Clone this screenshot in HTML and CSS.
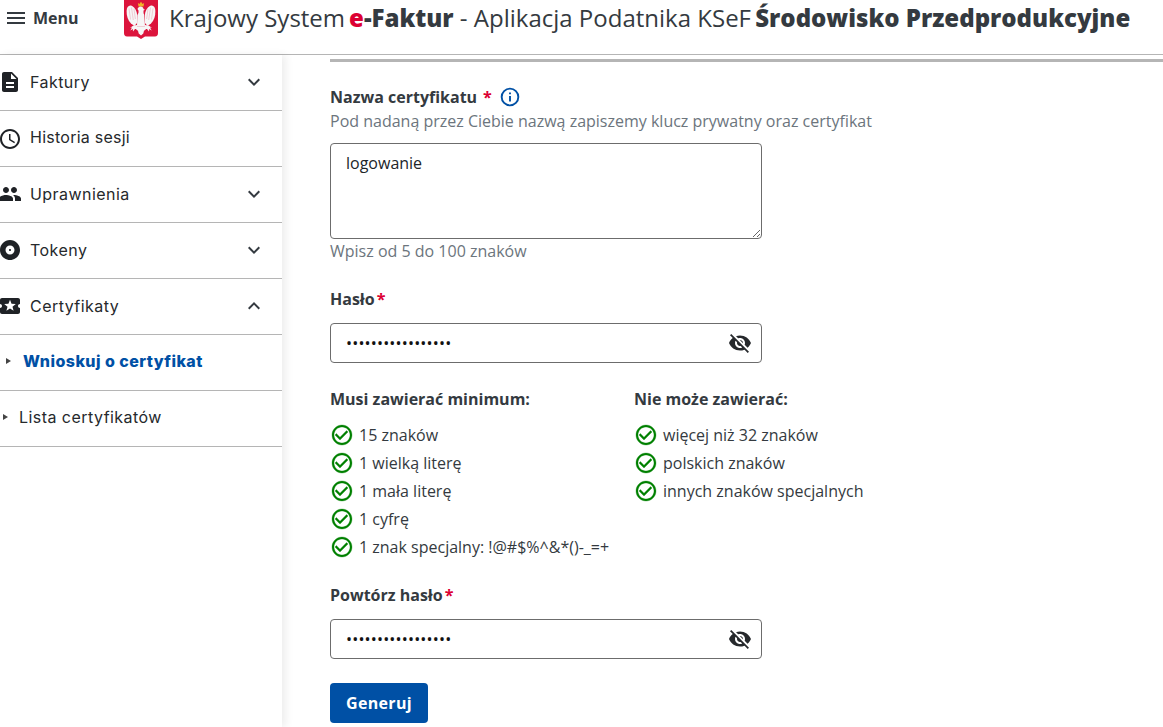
FILE: index.html
```html
<!DOCTYPE html>
<html lang="pl">
<head>
<meta charset="utf-8">
<title>Krajowy System e-Faktur</title>
<link rel="stylesheet" href="styles.css">
</head>
<body>
<header class="topbar">
  <button class="menu-btn" type="button">
    <svg class="ico-menu" viewBox="0 0 24 24"><path d="M3 18h18v-2H3v2zm0-5h18v-2H3v2zm0-7v2h18V6H3z"/></svg>
    <span>Menu</span>
  </button>
  <svg class="emblem" viewBox="0 0 34 40">
    <path class="shield" d="M0 -2h34v35c0 2-1 3.500-3 3.500h-10l-4 2.500-4-2.500H3c-2 0-3-1.500-3-3.500z"/>
    <path class="crown" d="M14.500 6.500l-.6-3.500 1.500 1 1.600-2.200 1.600 2.200 1.500-1-.6 3.500z"/>
    <g class="eagle">
      <path d="M16.500 6.500c1.800 0 3 1 3 2.500l1.500.8-1.500.6v2c0 .8.300 1.500.8 2.300L21 26h-8l.300-10.800c.4-1.200 1-1.800 1.200-2.700V10.500L13.500 9c.6-1.500 1.600-2.500 3-2.500z"/>
      <path id="wing" d="M13 14C12.500 10 10 6.500 7 5.500 4.300 5 2.700 7.500 2.600 11c-.1 5 1.400 9.500 4.400 12.500l3.500 2.500 2.500-3z"/>
      <path d="M21 14c.5-4 3-7.500 6-8.500 2.700-.5 4.300 2 4.400 5.500.1 5-1.400 9.500-4.400 12.500L23.500 26 21 23z"/>
      <path d="M13 25l-3.500.6-3.500 2.200 2-.2-1.700 3 2.500-1.500.2 2.500 2-2.600L13 29zM21 25l3.500.6 3.500 2.200-2-.2 1.700 3-2.500-1.500-.2 2.500-2-2.600L21 29z"/>
      <path d="M13 26h8l.8 3.500-1.800 1.200-.7 2.800-2.300 2-2.300-2-.7-2.800-1.800-1.200z"/>
    </g>
    <path class="feathers" d="M5 8.500l1.500 11M7.500 7.500l1.800 12.500M10 9l1.400 10M29 8.500l-1.500 11M26.500 7.500L24.700 20M24 9l-1.400 10M13 26.500h8"/>
  </svg>
  <h1 class="app-title">Krajowy System<span class="brand"><span class="brand-e">e</span>-Faktur</span> - Aplikacja Podatnika KSeF <strong class="env">Środowisko Przedprodukcyjne</strong></h1>
</header>

<div class="shell">
  <nav class="sidebar">
    <a class="nav-row">
      <svg class="nav-ico" viewBox="0 0 24 24"><path d="M14 2H6c-1.100 0-1.990.9-1.990 2L4 20c0 1.100.89 2 1.990 2H18c1.100 0 2-.9 2-2V8l-6-6zm2 16H8v-2h8v2zm0-4H8v-2h8v2zm-3-5V3.500L18.500 9H13z"/></svg>
      <span class="nav-text">Faktury</span>
      <svg class="chev" viewBox="0 0 24 24"><path d="M7.410 8.590L12 13.170l4.590-4.580L18 10l-6 6-6-6z"/></svg>
    </a>
    <a class="nav-row nav-plain">
      <svg class="nav-ico" viewBox="0 0 24 24"><path d="M11.990 2C6.470 2 2 6.480 2 12s4.470 10 9.990 10C17.520 22 22 17.520 22 12S17.520 2 11.990 2zM12 20c-4.420 0-8-3.580-8-8s3.580-8 8-8 8 3.580 8 8-3.580 8-8 8zm.5-13H11v6l5.250 3.150.75-1.230-4.500-2.670z"/></svg>
      <span class="nav-text">Historia sesji</span>
    </a>
    <a class="nav-row">
      <svg class="nav-ico" viewBox="0 0 24 24"><path d="M16 11c1.660 0 2.990-1.340 2.990-3S17.660 5 16 5c-1.660 0-3 1.340-3 3s1.340 3 3 3zm-8 0c1.660 0 2.990-1.340 2.990-3S9.660 5 8 5C6.340 5 5 6.340 5 8s1.340 3 3 3zm0 2c-2.330 0-7 1.170-7 3.500V19h14v-2.500c0-2.330-4.670-3.500-7-3.500zm8 0c-.29 0-.62.02-.97.05 1.160.84 1.970 1.970 1.970 3.450V19h6v-2.500c0-2.330-4.670-3.500-7-3.500z"/></svg>
      <span class="nav-text">Uprawnienia</span>
      <svg class="chev" viewBox="0 0 24 24"><path d="M7.410 8.590L12 13.170l4.590-4.580L18 10l-6 6-6-6z"/></svg>
    </a>
    <a class="nav-row">
      <svg class="nav-ico" viewBox="0 0 24 24"><path d="M12 2C6.480 2 2 6.480 2 12s4.480 10 10 10 10-4.480 10-10S17.520 2 12 2zm0 14.500c-2.490 0-4.500-2.010-4.500-4.500S9.510 7.500 12 7.500s4.500 2.010 4.500 4.500-2.010 4.500-4.500 4.500zm0-5.500c-.55 0-1 .45-1 1s.45 1 1 1 1-.45 1-1-.45-1-1-1z"/></svg>
      <span class="nav-text">Tokeny</span>
      <svg class="chev" viewBox="0 0 24 24"><path d="M7.410 8.590L12 13.170l4.590-4.580L18 10l-6 6-6-6z"/></svg>
    </a>
    <a class="nav-row">
      <svg class="nav-ico" viewBox="0 0 24 24"><path d="M20 12c0-1.100.9-2 2-2V6c0-1.100-.9-2-2-2H4c-1.100 0-1.990.9-1.990 2v4c1.100 0 1.990.9 1.990 2s-.89 2-2 2v4c0 1.100.9 2 2 2h16c1.100 0 2-.9 2-2v-4c-1.100 0-2-.9-2-2zm-4.420 4.800L12 14.500l-3.580 2.300 1.080-4.120-3.290-2.690 4.240-.25L12 5.800l1.540 3.950 4.240.25-3.290 2.690 1.090 4.110z"/></svg>
      <span class="nav-text">Certyfikaty</span>
      <svg class="chev" viewBox="0 0 24 24"><path d="M7.410 15.410L12 10.830l4.590 4.580L18 14l-6-6-6 6z"/></svg>
    </a>
    <a class="nav-row sub sub-active"><span class="tri"></span><span class="nav-text">Wnioskuj o certyfikat</span></a>
    <a class="nav-row sub"><span class="tri"></span><span class="nav-text">Lista certyfikatów</span></a>
  </nav>

  <main class="content">
    <div class="rule"></div>

    <section class="field field-name">
      <div class="label-line">
        <label class="label" for="cert">Nazwa certyfikatu</label>
        <span class="req req-spaced">*</span>
        <svg class="info" viewBox="0 0 18 18"><circle cx="9" cy="9" r="7.500"/><path d="M9 8v5M9 5v1.600"/></svg>
      </div>
      <p class="hint">Pod nadaną przez Ciebie nazwą zapiszemy klucz prywatny oraz certyfikat</p>
      <textarea id="cert" class="textbox">logowanie</textarea>
      <p class="hint hint-below">Wpisz od 5 do 100 znaków</p>
    </section>

    <section class="field field-pass">
      <div class="label-line"><label class="label" for="p1">Hasło</label><span class="req">*</span></div>
      <div class="pass-wrap">
        <input id="p1" class="pass" type="password" value="aaaaaaaaaaaaaaaaa">
        <svg class="eye" viewBox="0 0 24 24"><path d="M12 7c2.760 0 5 2.240 5 5 0 .65-.13 1.260-.36 1.830l2.920 2.920c1.510-1.260 2.700-2.890 3.430-4.750-1.730-4.390-6-7.500-11-7.500-1.400 0-2.740.25-3.980.7l2.160 2.160C10.740 7.130 11.350 7 12 7zM2 4.270l2.280 2.280.46.46C3.080 8.300 1.780 10.020 1 12c1.730 4.390 6 7.500 11 7.500 1.550 0 3.030-.3 4.380-.84l.42.42L19.730 22 21 20.730 3.270 3 2 4.270zM7.530 9.800l1.550 1.550c-.05.21-.08.43-.08.65 0 1.660 1.340 3 3 3 .22 0 .44-.03.65-.08l1.550 1.550c-.67.33-1.410.53-2.200.53-2.760 0-5-2.240-5-5 0-.79.2-1.530.53-2.200zm4.310-.78l3.150 3.150.02-.16c0-1.660-1.340-3-3-3l-.17.01z"/></svg>
      </div>
    </section>

    <section class="rules">
      <div class="rules-col rules-must">
        <h2 class="rules-title">Musi zawierać minimum:</h2>
        <ul class="checks">
          <li><svg class="tick" viewBox="0 0 24 24"><path d="M16.590 7.580L10 14.170l-3.590-3.580L5 12l5 5 8-8zM12 2C6.480 2 2 6.480 2 12s4.480 10 10 10 10-4.480 10-10S17.520 2 12 2zm0 18c-4.420 0-8-3.580-8-8s3.580-8 8-8 8 3.580 8 8-3.580 8-8 8z"/></svg>15 znaków</li>
          <li><svg class="tick" viewBox="0 0 24 24"><path d="M16.590 7.580L10 14.170l-3.590-3.580L5 12l5 5 8-8zM12 2C6.480 2 2 6.480 2 12s4.480 10 10 10 10-4.480 10-10S17.520 2 12 2zm0 18c-4.420 0-8-3.580-8-8s3.580-8 8-8 8 3.580 8 8-3.580 8-8 8z"/></svg>1 wielką literę</li>
          <li><svg class="tick" viewBox="0 0 24 24"><path d="M16.590 7.580L10 14.170l-3.590-3.580L5 12l5 5 8-8zM12 2C6.480 2 2 6.480 2 12s4.480 10 10 10 10-4.480 10-10S17.520 2 12 2zm0 18c-4.420 0-8-3.580-8-8s3.580-8 8-8 8 3.580 8 8-3.580 8-8 8z"/></svg>1 mała literę</li>
          <li><svg class="tick" viewBox="0 0 24 24"><path d="M16.590 7.580L10 14.170l-3.590-3.580L5 12l5 5 8-8zM12 2C6.480 2 2 6.480 2 12s4.480 10 10 10 10-4.480 10-10S17.520 2 12 2zm0 18c-4.420 0-8-3.580-8-8s3.580-8 8-8 8 3.580 8 8-3.580 8-8 8z"/></svg>1 cyfrę</li>
          <li><svg class="tick" viewBox="0 0 24 24"><path d="M16.590 7.580L10 14.170l-3.590-3.580L5 12l5 5 8-8zM12 2C6.480 2 2 6.480 2 12s4.480 10 10 10 10-4.480 10-10S17.520 2 12 2zm0 18c-4.420 0-8-3.580-8-8s3.580-8 8-8 8 3.580 8 8-3.580 8-8 8z"/></svg>1 znak specjalny: !@#$%^&amp;*()-_=+</li>
        </ul>
      </div>
      <div class="rules-col">
        <h2 class="rules-title">Nie może zawierać:</h2>
        <ul class="checks">
          <li><svg class="tick" viewBox="0 0 24 24"><path d="M16.590 7.580L10 14.170l-3.590-3.580L5 12l5 5 8-8zM12 2C6.480 2 2 6.480 2 12s4.480 10 10 10 10-4.480 10-10S17.520 2 12 2zm0 18c-4.420 0-8-3.580-8-8s3.580-8 8-8 8 3.580 8 8-3.580 8-8 8z"/></svg>więcej niż 32 znaków</li>
          <li><svg class="tick" viewBox="0 0 24 24"><path d="M16.590 7.580L10 14.170l-3.590-3.580L5 12l5 5 8-8zM12 2C6.480 2 2 6.480 2 12s4.480 10 10 10 10-4.480 10-10S17.520 2 12 2zm0 18c-4.420 0-8-3.580-8-8s3.580-8 8-8 8 3.580 8 8-3.580 8-8 8z"/></svg>polskich znaków</li>
          <li><svg class="tick" viewBox="0 0 24 24"><path d="M16.590 7.580L10 14.170l-3.590-3.580L5 12l5 5 8-8zM12 2C6.480 2 2 6.480 2 12s4.480 10 10 10 10-4.480 10-10S17.520 2 12 2zm0 18c-4.420 0-8-3.580-8-8s3.580-8 8-8 8 3.580 8 8-3.580 8-8 8z"/></svg>innych znaków specjalnych</li>
        </ul>
      </div>
    </section>

    <section class="field field-repeat">
      <div class="label-line"><label class="label" for="p2">Powtórz hasło</label><span class="req">*</span></div>
      <div class="pass-wrap">
        <input id="p2" class="pass" type="password" value="aaaaaaaaaaaaaaaaa">
        <svg class="eye" viewBox="0 0 24 24"><path d="M12 7c2.760 0 5 2.240 5 5 0 .65-.13 1.260-.36 1.830l2.920 2.920c1.510-1.260 2.700-2.890 3.430-4.750-1.730-4.390-6-7.500-11-7.500-1.400 0-2.740.25-3.980.7l2.160 2.160C10.740 7.130 11.350 7 12 7zM2 4.270l2.280 2.280.46.46C3.080 8.300 1.780 10.020 1 12c1.730 4.390 6 7.500 11 7.500 1.550 0 3.030-.3 4.380-.84l.42.42L19.730 22 21 20.730 3.270 3 2 4.270zM7.530 9.800l1.550 1.550c-.05.21-.08.43-.08.65 0 1.660 1.340 3 3 3 .22 0 .44-.03.65-.08l1.550 1.550c-.67.33-1.410.53-2.200.53-2.760 0-5-2.240-5-5 0-.79.2-1.530.53-2.200zm4.310-.78l3.150 3.150.02-.16c0-1.660-1.340-3-3-3l-.17.01z"/></svg>
      </div>
    </section>

    <button class="submit" type="button">Generuj</button>
  </main>
</div>
</body>
</html>
```

FILE: styles.css
```css
* { box-sizing: border-box; }
html, body { height: 100%; }
body {
  margin: 0;
  height: 727px;
  overflow: hidden;
  background: #fff;
  color: #343a40;
  font: 16px/24px "Open Sans", "Liberation Sans", sans-serif;
}

/* top bar */
.topbar {
  display: flex;
  align-items: flex-start;
  height: 55px;
  border-bottom: 1px solid #b5b5b5;
}
.menu-btn {
  display: flex;
  align-items: center;
  gap: 5px;
  width: 124px;
  height: 36px;
  padding: 0 0 0 4px;
  border: 0;
  background: none;
  color: #343a40;
  font: 700 16px/20px "Open Sans", sans-serif;
}
.ico-menu { width: 24px; height: 24px; fill: #343a40; }
.emblem { width: 34px; height: 40px; flex: none; }
.shield { fill: #dc143c; }
.crown { fill: #f0b429; }
.eagle { fill: #f6f6f6; }
.feathers { fill: none; stroke: #e9a3b0; stroke-width: .5; }
.app-title {
  margin: 0 0 0 11px;
  font-size: 24px;
  font-weight: 400;
  line-height: 36px;
  white-space: nowrap;
  color: #343a40;
}
.brand { margin-left: 4px; font-weight: 800; }
.brand-e { color: #dc0032; }
.env { margin-left: -2px; font-weight: 800; }

/* shell */
.shell { display: flex; height: 672px; }
.sidebar {
  flex: none;
  width: 282px;
  height: 100%;
  box-shadow: 4px 0 8px rgba(0, 0, 0, .07);
}
.nav-row {
  display: flex;
  align-items: center;
  height: 56px;
  padding: 0 16px 2px 0;
  border-bottom: 1px solid #b5b5b5;
  color: #26292c;
  font: 400 16px/24px Inter, "Open Sans", sans-serif;
}
.nav-ico { flex: none; width: 24px; height: 24px; margin: 0 8px 0 -2px; fill: #1f2226; }
.nav-text { flex: 1; letter-spacing: .45px; }
.nav-plain { padding-bottom: 3px; }
.nav-plain .nav-ico { margin-bottom: -3px; }
.nav-plain .nav-text { letter-spacing: .25px; }
.chev { flex: none; width: 24px; height: 24px; fill: #343a40; }
.sub { padding-left: 3px; padding-bottom: 4px; }
.tri {
  flex: none;
  width: 0;
  height: 0;
  margin-right: 11px;
  border-left: 5px solid #444;
  border-top: 3px solid transparent;
  border-bottom: 3px solid transparent;
}
.sub-active { padding-left: 6px; color: #0050a5; }
.sub-active .nav-text { font-weight: 800; }
.sub-active .tri { margin-right: 12px; }

/* content */
.content { flex: 1; padding: 4px 0 0 48px; }
.rule { height: 3px; background: #b5b5b5; }
.field-name { margin-top: 23px; }
.label-line { display: flex; align-items: center; height: 24px; }
.label { font-weight: 700; color: #343a40; }
.req { color: #dc0032; font-weight: 700; margin-left: 2px; }
.req-spaced { margin-left: 6px; }
.info {
  width: 20px;
  height: 20px;
  margin-left: 8px;
  fill: none;
  stroke: #0050a5;
  stroke-width: 1.700;
}
.hint { margin: 0; color: #6c757d; }
.textbox {
  display: block;
  width: 432px;
  height: 96px;
  margin-top: 10px;
  padding: 7px 15px;
  border: 1px solid #6c6c6c;
  border-radius: 4px;
  color: #212529;
  font: 16px/24px "Open Sans", sans-serif;
}
.hint-below { margin-top: 0; }
.field-pass { margin-top: 24px; }
.field-pass .pass-wrap, .field-repeat .pass-wrap { margin-top: 12px; }
.pass-wrap { position: relative; width: 432px; height: 40px; }
.pass {
  display: block;
  width: 100%;
  height: 100%;
  padding: 0 48px 0 15px;
  border: 1px solid #6c6c6c;
  border-radius: 4px;
  color: #111;
  letter-spacing: .18px;
  font: 16px/24px "Open Sans", sans-serif;
}
.eye {
  position: absolute;
  top: 8px;
  right: 10px;
  width: 24px;
  height: 24px;
  fill: #26292c;
}
.rules { display: flex; margin-top: 24px; }
.rules-col { flex: none; }
.rules-must { width: 304px; }
.rules-title { margin: 0; font-size: 16px; font-weight: 700; line-height: 24px; color: #343a40; }
.checks { margin: 10px 0 0; padding: 0; list-style: none; }
.checks li { display: flex; align-items: center; height: 28px; white-space: nowrap; color: #343a40; }
.tick { flex: none; width: 24px; height: 24px; margin-right: 5px; fill: #008000; stroke: #008000; stroke-width: .3; }
.field-repeat { margin-top: 22px; }
.submit {
  display: block;
  width: 98px;
  height: 40px;
  margin-top: 24px;
  border: 0;
  border-radius: 4px;
  background: #0050a5;
  color: #fff;
  letter-spacing: .3px;
  font: 700 16px/24px "Open Sans", sans-serif;
}
```
